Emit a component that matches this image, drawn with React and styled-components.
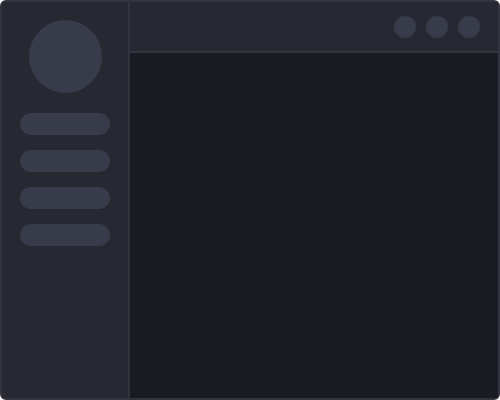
import * as React from 'react';
import styled, { createGlobalStyle } from 'styled-components';

const GlobalStyle = createGlobalStyle`
  html, body {
    margin: 0;
    padding: 0;
    background: #ffffff;
  }
  #root {
    width: 500px;
    height: 400px;
  }
`;

const Frame = styled.div`
  width: 500px;
  height: 400px;
  box-sizing: border-box;
  border: 2px solid #32333e;
  border-radius: 6px;
  overflow: hidden;
  display: grid;
  grid-template-columns: 128px 1fr;
  background: #1a1b20;
`;

const Sidebar = styled.aside`
  background: #272832;
  border-right: 2px solid #32333e;
  display: flex;
  flex-direction: column;
  align-items: center;
  padding-top: 18px;
`;

const Avatar = styled.div`
  width: 73px;
  height: 73px;
  border-radius: 50%;
  background: #383c4a;
  margin-bottom: 20px;
`;

const NavList = styled.nav`
  display: flex;
  flex-direction: column;
  gap: 15px;
`;

const NavPill = styled.div`
  width: 90px;
  height: 22px;
  border-radius: 11px;
  background: #383c4a;
`;

const Content = styled.section`
  display: flex;
  flex-direction: column;
`;

const Header = styled.header`
  height: 49px;
  background: #272832;
  border-bottom: 2px solid #32333e;
  display: flex;
  align-items: center;
  justify-content: flex-end;
  gap: 10px;
  padding-right: 18px;
`;

const Dot = styled.div`
  width: 22px;
  height: 22px;
  border-radius: 50%;
  background: #383c4a;
`;

const Body = styled.main`
  flex: 1;
  background: #1a1b20;
`;

export default function App() {
  return (
    <>
      <GlobalStyle />
      <Frame>
        <Sidebar>
          <Avatar />
          <NavList>
            {[0, 1, 2, 3].map((i) => (
              <NavPill key={i} />
            ))}
          </NavList>
        </Sidebar>
        <Content>
          <Header>
            <Dot />
            <Dot />
            <Dot />
          </Header>
          <Body />
        </Content>
      </Frame>
    </>
  );
}
